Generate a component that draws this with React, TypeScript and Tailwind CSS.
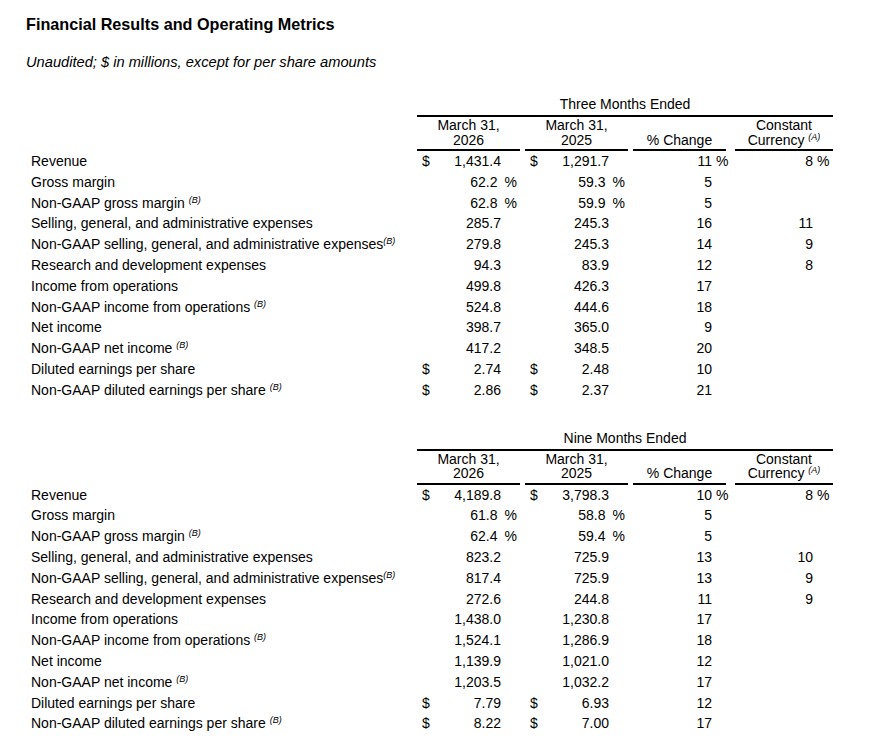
import React from "react";

type Row = {
  label: string;
  sup?: "space" | "tight";
  c1: string;
  c2: string;
  c3: string;
  c4?: string;
  dollar?: boolean;
  pct12?: boolean;
  pct34?: boolean;
};

const FONT = { fontFamily: '"Liberation Sans", Arial, sans-serif' };

function Sup({ children }: { children: React.ReactNode }) {
  return (
    <span className="relative -top-[5px] text-[9px] italic leading-none">{children}</span>
  );
}

function Label({ row }: { row: Row }) {
  return (
    <div className="w-[391px] shrink-0 pl-[5px] whitespace-nowrap">
      {row.label}
      {row.sup === "space" && (
        <>
          {" "}
          <Sup>(B)</Sup>
        </>
      )}
      {row.sup === "tight" && <Sup>(B)</Sup>}
    </div>
  );
}

function MoneyCell({
  v,
  dollar,
  pct,
  w,
  ml,
}: {
  v: string;
  dollar?: boolean;
  pct?: boolean;
  w: string;
  ml: string;
}) {
  return (
    <div className={`${w} ${ml} shrink-0 flex items-center`}>
      <span className="w-[14px] pl-[5px]">{dollar ? "$" : ""}</span>
      {pct ? (
        <span className="flex-1 flex justify-end pr-[3px]">
          <span>{v}</span>
          <span className="ml-[7px]">%</span>
        </span>
      ) : (
        <span className="flex-1 text-right pr-[19px]">{v}</span>
      )}
    </div>
  );
}

function ChangeCell({
  v,
  pct,
  w,
  ml,
  pr,
}: {
  v?: string;
  pct?: boolean;
  w: string;
  ml: string;
  pr: string;
}) {
  return (
    <div className={`${w} ${ml} shrink-0 flex justify-end ${pr}`}>
      <span className="relative">
        {v ?? ""}
        {pct && <span className="absolute left-full top-0 pl-[4px]">%</span>}
      </span>
    </div>
  );
}

function DataRow({ row }: { row: Row }) {
  return (
    <div className="flex h-[20.8px] items-center leading-[20.8px]">
      <Label row={row} />
      <MoneyCell v={row.c1} dollar={row.dollar} pct={row.pct12} w="w-[103px]" ml="ml-0" />
      <MoneyCell v={row.c2} dollar={row.dollar} pct={row.pct12} w="w-[103px]" ml="ml-[5px]" />
      <ChangeCell v={row.c3} pct={row.pct34} w="w-[93px]" ml="ml-[5px]" pr="pr-[14px]" />
      <ChangeCell v={row.c4} pct={row.pct34} w="w-[98px]" ml="ml-[9px]" pr="pr-[20px]" />
    </div>
  );
}

function Table({ title, rows }: { title: string; rows: Row[] }) {
  return (
    <div>
      <div className="ml-[391px] w-[416px] border-b-2 border-black pb-[3px] text-center leading-[16px]">
        {title}
      </div>
      <div className="flex h-[34px] leading-[14.5px]">
        <div className="w-[391px] shrink-0" />
        <div className="w-[103px] shrink-0 border-b-2 border-black flex flex-col justify-end items-center pb-[2px] text-center">
          <div>March 31,</div>
          <div>2026</div>
        </div>
        <div className="ml-[5px] w-[103px] shrink-0 border-b-2 border-black flex flex-col justify-end items-center pb-[2px] text-center">
          <div>March 31,</div>
          <div>2025</div>
        </div>
        <div className="ml-[5px] w-[93px] shrink-0 border-b-2 border-black flex flex-col justify-end items-center pb-[2px] text-center">
          <div>% Change</div>
        </div>
        <div className="ml-[9px] w-[98px] shrink-0 border-b-2 border-black flex flex-col justify-end items-center pb-[2px] text-center">
          <div>Constant</div>
          <div className="whitespace-nowrap">
            Currency{" "}
            <span className="relative -top-[5px] text-[9px] italic leading-none">(A)</span>
          </div>
        </div>
      </div>
      <div>
        {rows.map((r, i) => (
          <DataRow key={i} row={r} />
        ))}
      </div>
    </div>
  );
}

const three: Row[] = [
  { label: "Revenue", c1: "1,431.4", c2: "1,291.7", c3: "11", c4: "8", dollar: true, pct34: true },
  { label: "Gross margin", c1: "62.2", c2: "59.3", c3: "5", pct12: true },
  { label: "Non-GAAP gross margin", sup: "space", c1: "62.8", c2: "59.9", c3: "5", pct12: true },
  { label: "Selling, general, and administrative expenses", c1: "285.7", c2: "245.3", c3: "16", c4: "11" },
  { label: "Non-GAAP selling, general, and administrative expenses", sup: "tight", c1: "279.8", c2: "245.3", c3: "14", c4: "9" },
  { label: "Research and development expenses", c1: "94.3", c2: "83.9", c3: "12", c4: "8" },
  { label: "Income from operations", c1: "499.8", c2: "426.3", c3: "17" },
  { label: "Non-GAAP income from operations", sup: "space", c1: "524.8", c2: "444.6", c3: "18" },
  { label: "Net income", c1: "398.7", c2: "365.0", c3: "9" },
  { label: "Non-GAAP net income", sup: "space", c1: "417.2", c2: "348.5", c3: "20" },
  { label: "Diluted earnings per share", c1: "2.74", c2: "2.48", c3: "10", dollar: true },
  { label: "Non-GAAP diluted earnings per share", sup: "space", c1: "2.86", c2: "2.37", c3: "21", dollar: true },
];

const nine: Row[] = [
  { label: "Revenue", c1: "4,189.8", c2: "3,798.3", c3: "10", c4: "8", dollar: true, pct34: true },
  { label: "Gross margin", c1: "61.8", c2: "58.8", c3: "5", pct12: true },
  { label: "Non-GAAP gross margin", sup: "space", c1: "62.4", c2: "59.4", c3: "5", pct12: true },
  { label: "Selling, general, and administrative expenses", c1: "823.2", c2: "725.9", c3: "13", c4: "10" },
  { label: "Non-GAAP selling, general, and administrative expenses", sup: "tight", c1: "817.4", c2: "725.9", c3: "13", c4: "9" },
  { label: "Research and development expenses", c1: "272.6", c2: "244.8", c3: "11", c4: "9" },
  { label: "Income from operations", c1: "1,438.0", c2: "1,230.8", c3: "17" },
  { label: "Non-GAAP income from operations", sup: "space", c1: "1,524.1", c2: "1,286.9", c3: "18" },
  { label: "Net income", c1: "1,139.9", c2: "1,021.0", c3: "12" },
  { label: "Non-GAAP net income", sup: "space", c1: "1,203.5", c2: "1,032.2", c3: "17" },
  { label: "Diluted earnings per share", c1: "7.79", c2: "6.93", c3: "12", dollar: true },
  { label: "Non-GAAP diluted earnings per share", sup: "space", c1: "8.22", c2: "7.00", c3: "17", dollar: true },
];

export default function App() {
  return (
    <div className="min-h-[743px] w-[871px] bg-white pl-[26px] pt-[14px] text-black" style={FONT}>
      <h1 className="text-[16.2px] font-bold leading-[20px]">Financial Results and Operating Metrics</h1>
      <p className="mt-[18px] text-[14.67px] italic leading-[20px]">
        Unaudited; $ in millions, except for per share amounts
      </p>
      <div className="mt-[24px] text-[14px]">
        <Table title="Three Months Ended" rows={three} />
      </div>
      <div className="mt-[29px] text-[14px]">
        <Table title="Nine Months Ended" rows={nine} />
      </div>
    </div>
  );
}
